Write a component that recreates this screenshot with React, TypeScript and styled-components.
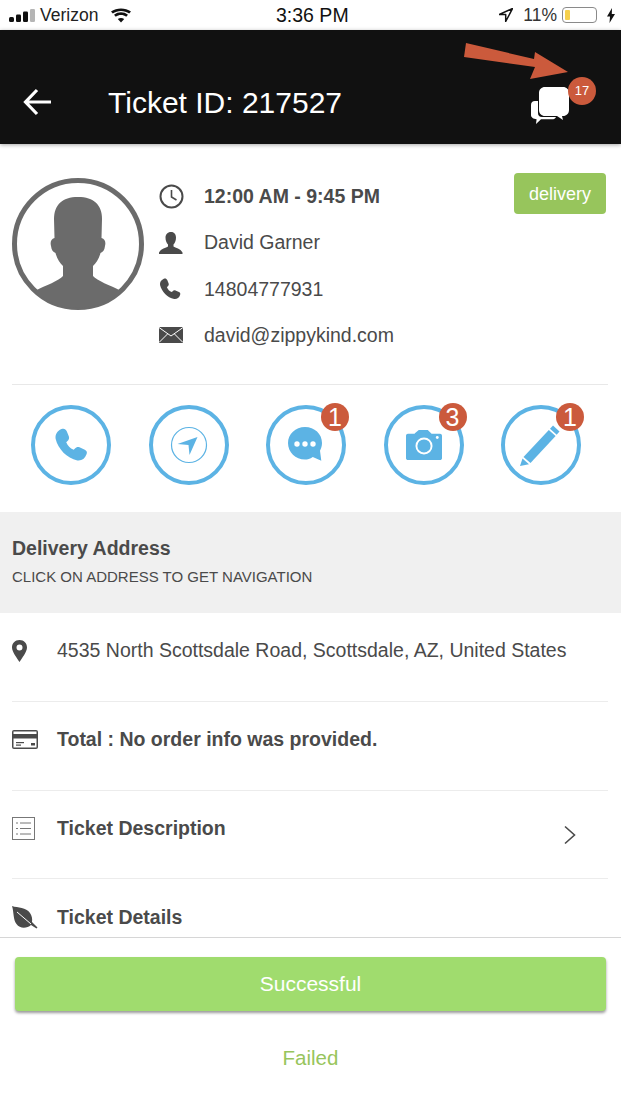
import { ReactNode } from 'react';
import styled, { createGlobalStyle } from 'styled-components';

const INK = '#4a4a4a';
const BLUE = '#5cb3e4';
const RED = '#cb5a3c';

const GlobalStyle = createGlobalStyle`
  html, body {
    margin: 0;
    padding: 0;
    background: #fff;
  }
  * {
    box-sizing: border-box;
  }
  body {
    font-family: "Liberation Sans", Arial, sans-serif;
    color: ${INK};
  }
`;

const PhoneGlyph = ({ size, color }: { size: number; color: string }) => (
  <svg width={size} height={size} viewBox="0 0 32 32" fill={color}>
    <path d="M7 1C9.500 0 11 1 12 3L14 8C14.500 10 14 11 12.500 12.500L11.500 13.500C13 17 15 19 18.500 20.500L19.500 19.500C21 18 22 17.500 24 18L29 20.500C31 21.500 31.500 23 30.500 25C29 29 26 31 22 30.500C12 28 4 20 1.500 10C1 6 3 3 7 1Z" />
  </svg>
);

const BubbleStack = () => (
  <svg width="38" height="37" viewBox="0 0 38 37" fill="#fff">
    <path d="M0 18c0-2.500 1.500-4 4-4h3v12c0 2.500 1.500 4 4 4h14c-.6 1.500-2 2.300-4 2.300H10l-5 4.700.6-4.800C2.500 32 0 30.500 0 28z" />
    <path d="M14 0h18c3.500 0 6 2.500 6 6v17c0 3.500-2.500 6-6 6h-1l1 4-6-4H14c-3.500 0-6-2.500-6-6V6c0-3.500 2.500-6 6-6z" />
  </svg>
);

const CompassGlyph = () => (
  <svg width="38" height="38" viewBox="0 0 38 38" fill="none">
    <circle cx="19" cy="19" r="17.500" stroke={BLUE} strokeWidth="1.200" />
    <path d="M7.500 18 27.500 11 19.500 29 18.500 19Z" fill={BLUE} />
  </svg>
);

const ChatGlyph = () => (
  <svg width="38" height="38" viewBox="0 0 38 38">
    <path
      d="M18 1c9.500 0 17 6.800 17 16 0 3-1 5.500-2 7.800l1.300 10-8.500-3.800C23 33 20.500 33.500 18 33.500 8.500 33.500 1 26 1 17S8.500 1 18 1z"
      fill={BLUE}
    />
    <circle cx="10" cy="18" r="2.700" fill="#fff" />
    <circle cx="18" cy="18" r="2.700" fill="#fff" />
    <circle cx="26" cy="18" r="2.700" fill="#fff" />
  </svg>
);

const CameraGlyph = () => (
  <svg width="36" height="30" viewBox="0 0 38 32" preserveAspectRatio="none">
    <path
      d="M2 4h7l1-1 3.500-3h9.500l4 4h9c1 0 2 1 2 2v24c0 1-1 2-2 2H2c-1 0-2-1-2-2V6c0-1 1-2 2-2z"
      fill={BLUE}
    />
    <circle cx="19" cy="17" r="8" fill="none" stroke="#fff" strokeWidth="2" />
    <circle cx="33" cy="8" r="1.500" fill="#fff" />
  </svg>
);

const PencilGlyph = () => (
  <svg width="42" height="42" viewBox="0 0 42 42" fill={BLUE}>
    <path d="M33 1.500l6.500 6-2.800 3.200-6.700-6z" />
    <path d="M28.800 6l6.800 6L10.500 39 3.500 33z" />
    <path d="M2.500 34.500l6.500 5.800L0 42z" />
  </svg>
);

const Status = () => (
  <StatusBar>
    <StatusSide>
      <svg width="27" height="13" viewBox="0 0 27 13">
        <rect x="0" y="8" width="5" height="5" rx="1.500" fill="#111" />
        <rect x="7" y="5.500" width="5" height="7.500" rx="1.200" fill="#111" />
        <rect x="14" y="2.500" width="5" height="10.500" rx="1.200" fill="#111" />
        <rect x="21" y="0" width="5" height="13" rx="1.200" fill="#b5b5b5" />
      </svg>
      <StatusText>Verizon</StatusText>
      <svg width="20" height="15" viewBox="0 0 20 14" style={{ marginLeft: 9 }}>
        <path d="M10 14 6.800 10.500c1.800-1.500 4.600-1.500 6.400 0z" fill="#111" />
        <path d="M4.800 8.300 3 6.300c4-3.300 10-3.300 14 0l-1.800 2c-3-2.300-7.400-2.300-10.400 0z" fill="#111" />
        <path d="M1.800 5 0 3C5.700-1 14.300-1 20 3l-1.800 2C13.400 1.600 6.600 1.600 1.800 5z" fill="#111" />
      </svg>
    </StatusSide>
    <StatusClock>3:36 PM</StatusClock>
    <StatusSide $right>
      <svg width="14" height="14" viewBox="0 0 14 14" style={{ marginRight: 3 }}>
        <path d="M13.500.500 0 6.500h6.700V13.500z" fill="none" stroke="#111" strokeWidth="1.500" strokeLinejoin="round" />
      </svg>
      <StatusText style={{ color: '#333' }}>11%</StatusText>
      <Battery>
        <BatteryLevel />
      </Battery>
      <svg width="8" height="15" viewBox="0 0 8 15" style={{ marginLeft: 3 }}>
        <path d="M5 0 0 8.500h3L2.500 15 8 6H4.800z" fill="#111" />
      </svg>
    </StatusSide>
  </StatusBar>
);

const Contact = ({ icon, bold, children }: { icon: ReactNode; bold?: boolean; children: ReactNode }) => (
  <ContactRow>
    <ContactIcon>{icon}</ContactIcon>
    <ContactText $bold={bold}>{children}</ContactText>
  </ContactRow>
);

const Action = ({ icon, count }: { icon: ReactNode; count?: number }) => (
  <ActionCircle>
    {icon}
    {count ? <ActionBadge>{count}</ActionBadge> : null}
  </ActionCircle>
);

const DetailRow = ({
  icon,
  bold,
  chevron,
  children,
}: {
  icon: ReactNode;
  bold?: boolean;
  chevron?: boolean;
  children: ReactNode;
}) => (
  <Row>
    <RowIcon>{icon}</RowIcon>
    <RowText $bold={bold}>{children}</RowText>
    {chevron && (
      <Chevron width="14" height="20" viewBox="0 0 14 20" fill="none">
        <path d="M2 1.500 11.500 10 2 18.500" stroke={INK} strokeWidth="1.600" />
      </Chevron>
    )}
  </Row>
);

export default function App() {
  return (
    <Screen>
      <GlobalStyle />
      <Status />
      <Header>
        <BackButton width="30" height="28" viewBox="0 0 30 28" fill="none">
          <path d="M28 14H3M14 2 2.500 14 14 26" stroke="#fff" strokeWidth="3.200" />
        </BackButton>
        <HeaderTitle>Ticket ID: 217527</HeaderTitle>
        <MessageButton>
          <BubbleStack />
          <MessageBadge>17</MessageBadge>
        </MessageButton>
        <ArrowMark width="621" height="144" viewBox="0 0 621 144">
          <path d="M466 43 534 59 535 52 568 72 530 79 535 67 464 57Z" fill={RED} />
        </ArrowMark>
      </Header>

      <Body>
        <Profile>
          <svg width="132" height="132" viewBox="0 0 132 132">
            <circle cx="66" cy="66" r="63.500" fill="#fff" stroke="#6b6b6b" strokeWidth="5" />
            <path
              d="M66 19C82 19 90 27 90 41L89.500 60C93 61 94 64 93 68 92.500 72 91 74 88.500 75 87 81 84 85 81 88V98C85 103 98 107 109 113A63.500 63.500 0 0 1 23 113C34 107 47 103 51 98V88C48 85 45 81 43.500 75 41 74 39.500 72 39 68 38 64 39 61 42.500 60L42 41C42 27 50 19 66 19Z"
              fill="#6b6b6b"
            />
          </svg>
          <ContactList>
            <Contact
              bold
              icon={
                <svg width="25" height="25" viewBox="0 0 25 25" fill="none" stroke={INK} strokeWidth="2">
                  <circle cx="12.500" cy="12.500" r="11" />
                  <path d="M12.500 6v7l5 3" strokeWidth="1.600" />
                </svg>
              }
            >
              12:00 AM - 9:45 PM
            </Contact>
            <Contact
              icon={
                <svg width="24" height="24" viewBox="0 0 24 24" fill={INK}>
                  <path d="M12 1c3.500 0 5 2.500 5 5.500 0 3-1 5.500-2.500 7v2c2 1.500 7 2 9 6v1.500H0V21.500c2-4 7-4.500 9-6v-2C7.500 12 6.500 9.500 6.500 6.500 6.500 3.500 8.500 1 12 1z" />
                </svg>
              }
            >
              David Garner
            </Contact>
            <Contact icon={<PhoneGlyph size={22} color={INK} />}>14804777931</Contact>
            <Contact
              icon={
                <svg width="24" height="16" viewBox="0 0 24 16">
                  <rect width="24" height="16" fill={INK} />
                  <path d="M0 .5 12 9 24 .5M0 15.500 8.500 7M24 15.500 15.500 7" stroke="#fff" strokeWidth="1" fill="none" />
                </svg>
              }
            >
              david@zippykind.com
            </Contact>
          </ContactList>
          <DeliveryTag>delivery</DeliveryTag>
        </Profile>

        <Actions>
          <Action icon={<PhoneGlyph size={34} color={BLUE} />} />
          <Action icon={<CompassGlyph />} />
          <Action icon={<ChatGlyph />} count={1} />
          <Action icon={<CameraGlyph />} count={3} />
          <Action icon={<PencilGlyph />} count={1} />
        </Actions>

        <AddressBand>
          <AddressTitle>Delivery Address</AddressTitle>
          <AddressHint>CLICK ON ADDRESS TO GET NAVIGATION</AddressHint>
        </AddressBand>

        <DetailRow
          icon={
            <svg width="15" height="22" viewBox="0 0 15 22" fill={INK}>
              <path
                fillRule="evenodd"
                d="M7.500 0C12 0 15 3.200 15 7.500 15 12 10 18 7.500 22 5 18 0 12 0 7.500 0 3.200 3 0 7.500 0zm0 4.500a3 3 0 1 0 0 6 3 3 0 0 0 0-6z"
              />
            </svg>
          }
        >
          4535 North Scottsdale Road, Scottsdale, AZ, United States
        </DetailRow>
        <DetailRow
          bold
          icon={
            <svg width="26" height="19" viewBox="0 0 26 19">
              <rect width="26" height="19" rx="2" fill={INK} />
              <rect x="1.500" y="1.500" width="23" height="2.500" fill="#fff" />
              <rect x="1.500" y="8.500" width="23" height="9" fill="#fff" />
              <rect x="4" y="12" width="8" height="1.200" fill={INK} />
              <rect x="4" y="14.500" width="5" height="1.200" fill={INK} />
              <rect x="19" y="13" width="4" height="2.500" fill={INK} />
            </svg>
          }
        >
          Total : No order info was provided.
        </DetailRow>
        <DetailRow
          bold
          chevron
          icon={
            <svg width="23" height="23" viewBox="0 0 23 23" fill="none" stroke="#777">
              <rect x=".5" y=".5" width="22" height="22" />
              <path d="M4 6h2M8 6h11M4 11.500h2M8 11.500h11M4 17h2M8 17h11" />
            </svg>
          }
        >
          Ticket Description
        </DetailRow>
        <DetailRow
          bold
          icon={
            <svg width="26" height="23" viewBox="0 0 26 23" fill={INK}>
              <path d="M0 0c6 2 14 1 18 7 2 3 2.500 6 2 9l5.500 5.500-1 1-5.500-3.500C15 22.500 8 23 4.500 18 1 13.500 2 6 0 0z" />
              <path d="M5 6 19 18" stroke="#fff" strokeWidth="1" fill="none" />
            </svg>
          }
        >
          Ticket Details
        </DetailRow>
      </Body>

      <Footer>
        <SuccessButton>Successful</SuccessButton>
        <FailedLink>Failed</FailedLink>
      </Footer>
    </Screen>
  );
}

const Screen = styled.div`
  position: relative;
  display: flex;
  flex-direction: column;
  width: 621px;
  height: 1104px;
  overflow: hidden;
  background: #fff;
`;

const StatusBar = styled.div`
  display: flex;
  align-items: center;
  justify-content: space-between;
  position: relative;
  height: 30px;
  padding: 0 6px 0 9px;
`;

const StatusSide = styled.div<{ $right?: boolean }>`
  display: flex;
  align-items: center;
  gap: ${({ $right }) => ($right ? '7px' : '4px')};
`;

const StatusText = styled.span`
  font-size: 17.500px;
  color: #222;
`;

const StatusClock = styled.span`
  position: absolute;
  left: 276px;
  font-size: 19.500px;
  color: #111;
`;

const Battery = styled.div`
  width: 35px;
  height: 16px;
  border: 1px solid #8a8a8a;
  border-radius: 4px;
  padding: 2px;
  margin-left: -2px;
`;

const BatteryLevel = styled.div`
  width: 5px;
  height: 100%;
  border-radius: 1px;
  background: #f6d04d;
`;

const Header = styled.header`
  position: relative;
  display: flex;
  align-items: center;
  height: 114px;
  padding: 30px 25px 0 23px;
  background: #111;
  box-shadow: 0 1px 4px rgba(0, 0, 0, 0.35);
`;

const BackButton = styled.svg`
  flex: none;
`;

const HeaderTitle = styled.h1`
  margin: 2px 0 0 55px;
  font-size: 30px;
  font-weight: 400;
  color: #fff;
`;

const MessageButton = styled.div`
  position: relative;
  margin-left: auto;
  margin-right: 27px;
  margin-top: 6px;
  display: flex;
`;

const MessageBadge = styled.span`
  position: absolute;
  top: -10px;
  right: -27px;
  width: 28px;
  height: 28px;
  border-radius: 50%;
  background: ${RED};
  color: #fff;
  font-size: 13px;
  line-height: 28px;
  text-align: center;
`;

const ArrowMark = styled.svg`
  position: absolute;
  left: 0;
  top: -30px;
  pointer-events: none;
`;

const Body = styled.main`
  flex: 1;
  min-height: 0;
  overflow: hidden;
`;

const Profile = styled.section`
  position: relative;
  display: flex;
  align-items: flex-start;
  gap: 15px;
  height: 241px;
  margin: 0 13px 0 12px;
  padding-top: 34px;
  border-bottom: 1px solid #e8e8e8;
`;

const ContactList = styled.div`
  display: flex;
  flex-direction: column;
  gap: 23.300px;
  padding-top: 7px;
`;

const ContactRow = styled.div`
  display: flex;
  align-items: center;
  height: 23px;
`;

const ContactIcon = styled.span`
  display: flex;
  justify-content: flex-start;
  width: 45px;
  flex: none;
`;

const ContactText = styled.span<{ $bold?: boolean }>`
  font-size: 19.500px;
  font-weight: ${({ $bold }) => ($bold ? 700 : 400)};
  color: ${INK};
`;

const DeliveryTag = styled.span`
  position: absolute;
  top: 29px;
  right: 2px;
  width: 92px;
  height: 41px;
  border-radius: 4px;
  background: #97c55c;
  color: #fff;
  font-size: 18px;
  line-height: 43px;
  text-align: center;
`;

const Actions = styled.section`
  display: grid;
  grid-template-columns: repeat(5, 80px);
  justify-content: space-between;
  height: 127px;
  padding: 20px 40px 0 31px;
`;

const ActionCircle = styled.div`
  position: relative;
  display: flex;
  align-items: center;
  justify-content: center;
  width: 80px;
  height: 80px;
  border: 4px solid ${BLUE};
  border-radius: 50%;
  background: #fff;
`;

const ActionBadge = styled.span`
  position: absolute;
  top: -6px;
  right: -7px;
  width: 28px;
  height: 28px;
  border-radius: 50%;
  background: ${RED};
  color: #fff;
  font-size: 25px;
  line-height: 28px;
  text-align: center;
`;

const AddressBand = styled.section`
  display: flex;
  flex-direction: column;
  justify-content: center;
  gap: 8px;
  height: 101px;
  padding: 0 12px 4px;
  background: #f0f0f0;
`;

const AddressTitle = styled.h2`
  margin: 0;
  font-size: 19.500px;
  font-weight: 700;
  color: ${INK};
`;

const AddressHint = styled.span`
  font-size: 15px;
  color: ${INK};
`;

const Row = styled.div`
  display: flex;
  align-items: center;
  height: 88.800px;
  margin: 0 13px 0 12px;
  padding-bottom: 12px;
  border-bottom: 1px solid #ececec;

  &:last-child {
    border-bottom: 0;
  }
`;

const RowIcon = styled.span`
  display: flex;
  flex: none;
  width: 45px;
`;

const RowText = styled.span<{ $bold?: boolean }>`
  font-size: 19.500px;
  font-weight: ${({ $bold }) => ($bold ? 700 : 400)};
  color: ${INK};
`;

const Chevron = styled.svg`
  margin-left: auto;
  margin-right: 31px;
  margin-top: 14px;
`;

const Footer = styled.footer`
  display: flex;
  flex: none;
  flex-direction: column;
  align-items: center;
  height: 167px;
  padding: 19px 15px 0;
  border-top: 1px solid #d6d6d6;
  background: #fff;
`;

const SuccessButton = styled.button`
  width: 100%;
  height: 54px;
  border: 0;
  border-radius: 4px;
  background: #a0dc6e;
  box-shadow: 0 2px 3px rgba(0, 0, 0, 0.4);
  color: #fff;
  font-family: inherit;
  font-size: 21px;
`;

const FailedLink = styled.span`
  margin-top: 35px;
  font-size: 20.500px;
  color: #97c55c;
`;
